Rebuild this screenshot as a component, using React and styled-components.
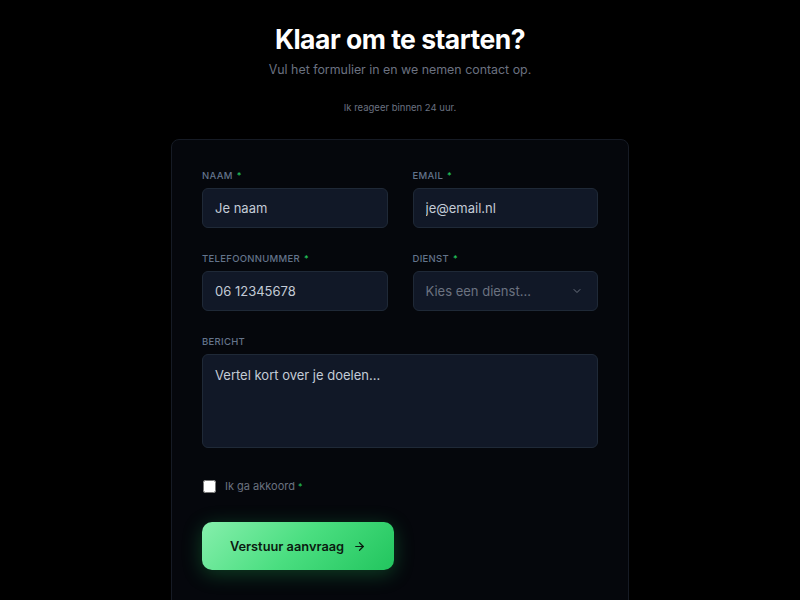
import React, { useState } from 'react';
import styled, { createGlobalStyle } from 'styled-components';

const GlobalStyle = createGlobalStyle`
  * { box-sizing: border-box; }
  body {
    margin: 0;
    background: #000;
    font-family: 'Inter', 'Noto Sans', sans-serif;
    color: #e2e8f0;
  }
`;

const Page = styled.div`
  display: flex;
  flex-direction: column;
  align-items: center;
  padding-top: 22px;
  height: 600px;
  overflow: hidden;
`;

const Title = styled.h1`
  margin: 0;
  font-size: 26.5px;
  font-weight: 700;
  letter-spacing: -0.5px;
  color: #fff;
  line-height: 34px;
`;

const Subtitle = styled.p`
  margin: 6px 0 0;
  font-size: 12.4px;
  color: #6b7280;
`;

const Note = styled.p`
  margin: 25px 0 0;
  font-size: 9.5px;
  color: #6b7280;
`;

const Card = styled.form`
  margin-top: 26px;
  width: 458px;
  padding: 30px 30px 40px;
  background: #05070c;
  border: 1px solid #161b25;
  border-radius: 8px;
  display: flex;
  flex-direction: column;
  gap: 25px;
`;

const Row = styled.div`
  display: grid;
  grid-template-columns: ${p => (p.$single ? '1fr' : '1fr 1fr')};
  gap: 25px;
`;

const Field = styled.div`
  display: flex;
  flex-direction: column;
  gap: 6px;
`;

const Label = styled.label`
  font-size: 9.5px;
  font-weight: 500;
  letter-spacing: 0.3px;
  text-transform: uppercase;
  color: #64748b;
  line-height: 12px;
`;

const Req = styled.span`
  color: #22c55e;
  margin-left: ${p => (p.$tight ? '0' : '4px')};
  font-size: 9px;
`;

const inputBase = `
  width: 100%;
  background: #111827;
  border: 1px solid #1f2937;
  border-radius: 6px;
  color: #c3cbd6;
  font-family: 'Inter', 'Noto Sans', sans-serif;
  font-size: 13px;
  padding: 0 12px;
  outline: none;
  &::placeholder { color: #c3cbd6; }
`;

const Input = styled.input`
  ${inputBase}
  height: 40px;
`;

const SelectBox = styled.div`
  ${inputBase}
  height: 40px;
  display: flex;
  align-items: center;
  justify-content: space-between;
  color: #6b7280;
  padding-right: 14px;
`;

const TextArea = styled.textarea`
  ${inputBase}
  height: 94px;
  padding: 12px;
  resize: none;
`;

const CheckRow = styled.label`
  display: flex;
  align-items: center;
  gap: 9px;
  margin-top: 6px;
  font-size: 11px;
  color: #6b7280;
`;

const Box = styled.input`
  width: 13px;
  height: 13px;
  margin: 0 0 0 1px;
  accent-color: #fff;
`;

const Button = styled.button`
  margin-top: 4px;
  width: 192px;
  height: 48px;
  border: none;
  border-radius: 10px;
  background: linear-gradient(135deg, #86efac 0%, #4ade80 50%, #22c55e 100%);
  box-shadow: 0 4px 20px rgba(34, 197, 94, 0.3);
  color: #0b1a10;
  font-family: 'Inter', 'Noto Sans', sans-serif;
  font-size: 12.8px;
  font-weight: 600;
  display: flex;
  align-items: center;
  justify-content: center;
  gap: 9px;
  cursor: pointer;
`;

export default function App() {
  const [agree, setAgree] = useState(false);
  return (
    <>
      <GlobalStyle />
      <Page>
        <Title>Klaar om te starten?</Title>
        <Subtitle>Vul het formulier in en we nemen contact op.</Subtitle>
        <Note>Ik reageer binnen 24 uur.</Note>
        <Card onSubmit={e => e.preventDefault()}>
          <Row>
            <Field>
              <Label>Naam<Req>*</Req></Label>
              <Input placeholder="Je naam" />
            </Field>
            <Field>
              <Label>Email<Req>*</Req></Label>
              <Input placeholder="je@email.nl" />
            </Field>
          </Row>
          <Row>
            <Field>
              <Label>Telefoonnummer<Req>*</Req></Label>
              <Input placeholder="06 12345678" />
            </Field>
            <Field>
              <Label>Dienst<Req>*</Req></Label>
              <SelectBox>
                Kies een dienst...
                <svg width="12" height="12" viewBox="0 0 24 24" fill="none" stroke="#6b7280" strokeWidth="2" strokeLinecap="round" strokeLinejoin="round">
                  <path d="m6 9 6 6 6-6" />
                </svg>
              </SelectBox>
            </Field>
          </Row>
          <Row $single>
            <Field>
              <Label>Bericht</Label>
              <TextArea placeholder="Vertel kort over je doelen..." />
            </Field>
          </Row>
          <CheckRow>
            <Box type="checkbox" checked={agree} onChange={() => setAgree(!agree)} />
            <span>Ik ga akkoord <Req $tight>*</Req></span>
          </CheckRow>
          <Button type="submit">
            Verstuur aanvraag
            <svg width="13" height="13" viewBox="0 0 24 24" fill="none" stroke="#0b1a10" strokeWidth="2.2" strokeLinecap="round" strokeLinejoin="round">
              <path d="M5 12h14" />
              <path d="m12 5 7 7-7 7" />
            </svg>
          </Button>
        </Card>
      </Page>
    </>
  );
}
